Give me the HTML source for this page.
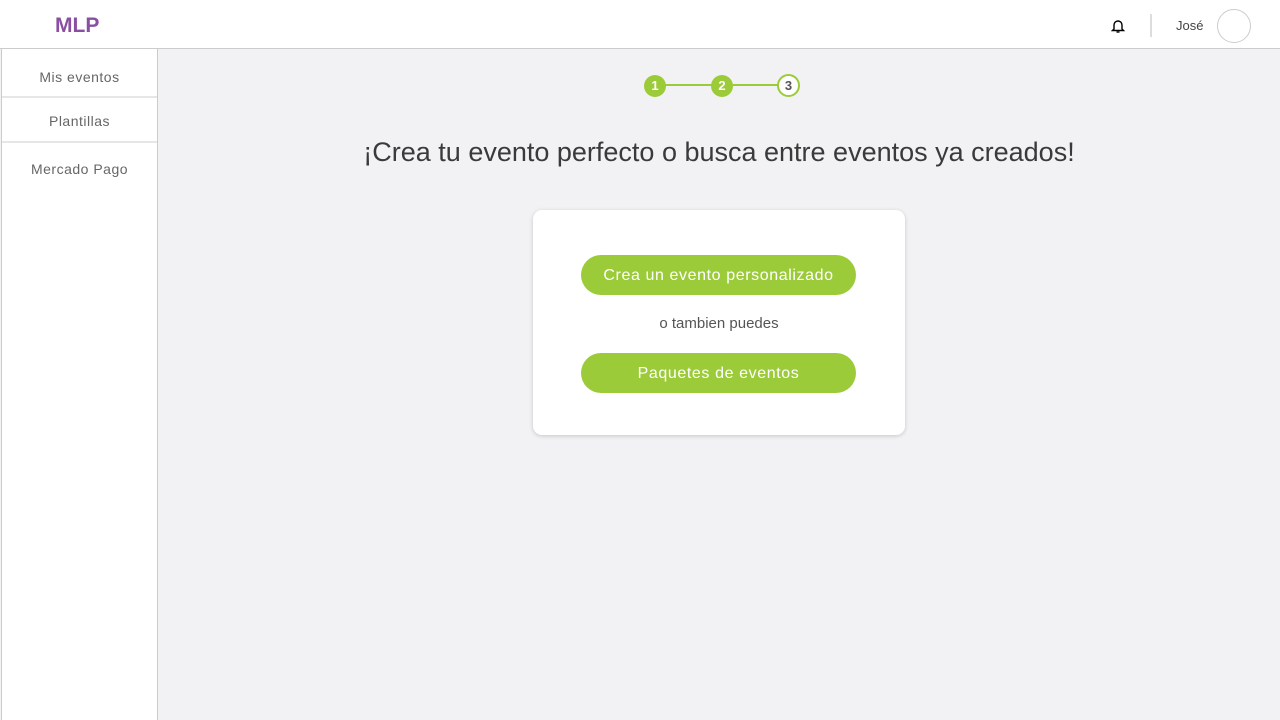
<!DOCTYPE html>
<html><head><meta charset="utf-8"><style>
*{margin:0;padding:0;box-sizing:border-box}
body{width:1280px;height:720px;overflow:hidden;background:#f2f2f4;font-family:"Liberation Sans",sans-serif;position:relative}
.top{position:absolute;left:0;top:0;width:1280px;height:49px;background:#fff;border-bottom:1px solid #ccc}
.logo{position:absolute;left:55px;top:14px;font-weight:bold;font-size:21px;color:#8a4fa3}
.side{position:absolute;left:1px;top:49px;width:157px;height:671px;background:#fff;border-left:1px solid #ccc;border-right:1px solid #ccc}
.item{height:49px;border-bottom:2px solid #e6e6e6;text-align:center;font-size:14px;color:#666;letter-spacing:0.5px}
.step{position:absolute;top:74px;width:22px;height:22px;border-radius:50%;font-size:13px;font-weight:bold;text-align:center;line-height:22px}
.card{position:absolute;left:533px;top:210px;width:372px;height:225px;background:#fff;border-radius:9px;box-shadow:0 1px 4px rgba(0,0,0,.18)}
.btn{position:absolute;left:48px;width:275px;height:40px;border-radius:20px;background:#9ccb3a;color:#fff;text-align:center;line-height:42px;font-size:16px;letter-spacing:0.6px}
</style></head><body>
<div class="top">
<div class="logo">MLP</div>
<svg style="position:absolute;left:1111px;top:18px" width="14" height="16" viewBox="0 0 14 16"><path d="M3 11V7a4 4 0 0 1 8 0v4l1.5 1.5h-11z" fill="none" stroke="#000" stroke-width="1.4"/><path d="M5.5 14h3" stroke="#000" stroke-width="1.4"/></svg>
<div style="position:absolute;left:1150px;top:14px;width:2px;height:23px;background:#ddd"></div>
<div style="position:absolute;left:1176px;top:18px;font-size:13px;color:#444">José</div>
<div style="position:absolute;left:1217px;top:9px;width:34px;height:34px;border-radius:50%;border:1px solid #ccc"></div>
</div>
<div class="side">
<div class="item" style="line-height:56px">Mis eventos</div>
<div class="item" style="height:45px;line-height:47px">Plantillas</div>
<div class="item" style="border:none;line-height:52px">Mercado Pago</div>
</div>
<div style="position:absolute;left:660px;top:84px;width:130px;height:2px;background:#9ccb3a"></div>
<div class="step" style="left:644px;top:75px;background:#9ccb3a;color:#fff">1</div>
<div class="step" style="left:711px;top:75px;background:#9ccb3a;color:#fff">2</div>
<div class="step" style="left:777px;top:74px;width:23px;height:23px;background:#fff;border:2px solid #9ccb3a;color:#555;line-height:20px">3</div>
<div style="position:absolute;left:158px;width:1122px;top:137px;text-align:center;font-size:27px;color:#3a3a3a">¡Crea tu evento perfecto o busca entre eventos ya creados!</div>
<div class="card">
<div class="btn" style="top:45px">Crea un evento personalizado</div>
<div style="position:absolute;left:0;width:372px;top:105px;text-align:center;font-size:15px;color:#555">o tambien puedes</div>
<div class="btn" style="top:143px">Paquetes de eventos</div>
</div>
</body></html>
